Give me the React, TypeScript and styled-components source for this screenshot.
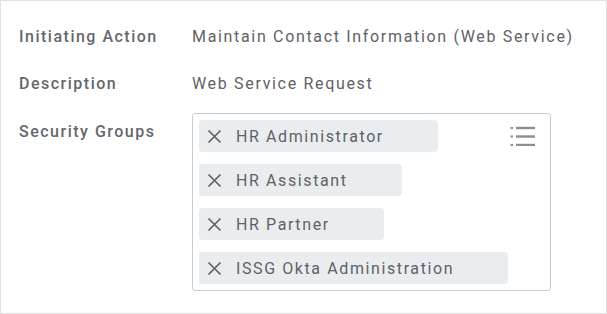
import React from "react";
import styled, { createGlobalStyle } from "styled-components";

const Global = createGlobalStyle`
  html, body { margin: 0; padding: 0; background: #fff; }
  body { font-family: Roboto, "Liberation Sans", Arial, sans-serif; }
  * { box-sizing: border-box; }
`;

const Panel = styled.div`
  width: 607px;
  height: 314px;
  border: 1px solid #e0e0e0;
  padding: 26px 0 0 18px;
  display: flex;
  flex-direction: column;
`;

const Row = styled.div<{ $gap: number }>`
  display: grid;
  grid-template-columns: 173px 1fr;
  margin-bottom: ${(p) => p.$gap}px;
`;

const Label = styled.div<{ $top?: number }>`
  font-size: 16px;
  line-height: 20px;
  font-weight: 500;
  letter-spacing: 1.5px;
  color: #64686c;
  padding-top: ${(p) => p.$top ?? 0}px;
  white-space: nowrap;
`;

const Value = styled.div`
  font-size: 16px;
  line-height: 20px;
  letter-spacing: 1.67px;
  color: #5e6266;
  white-space: nowrap;
`;

const Box = styled.div`
  position: relative;
  width: 359px;
  border: 1px solid #c9cdd1;
  border-radius: 3px;
  padding: 6px;
  display: flex;
  flex-direction: column;
  align-items: flex-start;
  gap: 12px;
`;

const Chip = styled.div`
  height: 32px;
  background: #e9edf0;
  border-radius: 4px;
  display: flex;
  align-items: center;
  padding-left: 8px;
  gap: 14px;
  font-size: 16px;
  letter-spacing: 1.6px;
  color: #5e6266;
  white-space: nowrap;
`;

const XIcon = styled.svg`
  width: 15px;
  height: 15px;
  flex: none;
`;

const ListIcon = styled.svg`
  position: absolute;
  top: 12px;
  right: 14px;
  width: 26px;
  height: 20px;
`;

const groups = [
  { name: "HR Administrator", width: 239 },
  { name: "HR Assistant", width: 203 },
  { name: "HR Partner", width: 185 },
  { name: "ISSG Okta Administration", width: 309 },
];

export default function App() {
  return (
    <>
      <Global />
      <Panel>
        <Row $gap={27}>
          <Label>Initiating Action</Label>
          <Value>Maintain Contact Information (Web Service)</Value>
        </Row>
        <Row $gap={19}>
          <Label>Description</Label>
          <Value>Web Service Request</Value>
        </Row>
        <Row $gap={0}>
          <Label $top={9}>Security Groups</Label>
          <Box>
            {groups.map((g) => (
              <Chip key={g.name} style={{ width: g.width }}>
                <XIcon viewBox="0 0 15 15">
                  <path d="M1.5 1.5 L13.5 13.5 M13.5 1.5 L1.5 13.5" stroke="#5f6367" strokeWidth="1.7" fill="none" />
                </XIcon>
                {g.name}
              </Chip>
            ))}
            <ListIcon viewBox="0 0 26 20">
              <g fill="#8a8e92">
                <rect x="0.5" y="1" width="2.5" height="2" />
                <rect x="6" y="0.8" width="19" height="2.4" />
                <rect x="0.5" y="9.5" width="2.5" height="2" />
                <rect x="6" y="9.3" width="19" height="2.4" />
                <rect x="0.5" y="18" width="2.5" height="2" />
                <rect x="6" y="17.8" width="19" height="2.4" />
              </g>
            </ListIcon>
          </Box>
        </Row>
      </Panel>
    </>
  );
}
